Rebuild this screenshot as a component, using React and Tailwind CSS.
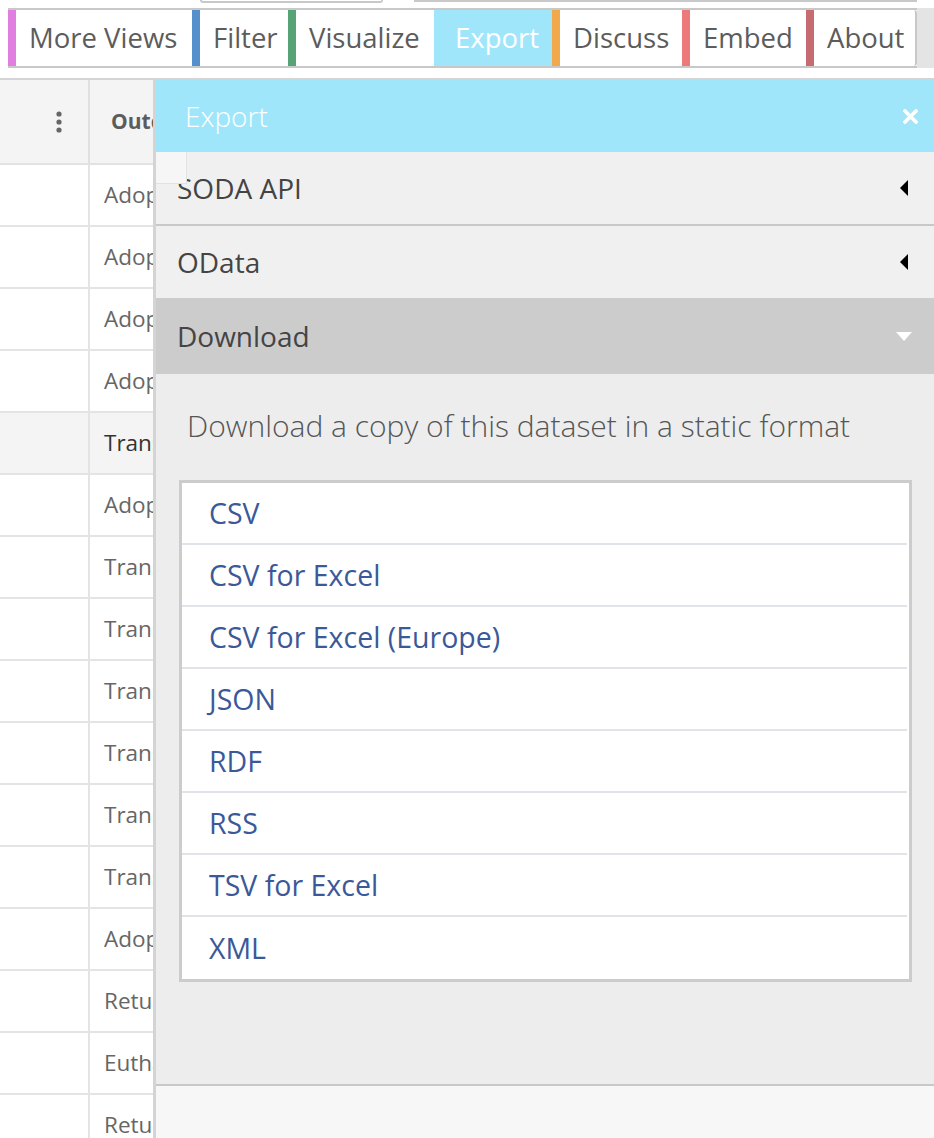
import React from 'react';

const tabs = [
  { label: 'More Views', bar: 'border-l-[#e07fe0]', w: 'w-[184px]' },
  { label: 'Filter', bar: 'border-l-[#5590cc]', w: 'w-[96px]' },
  { label: 'Visualize', bar: 'border-l-[#56a475]', w: 'w-[146px]' },
  { label: 'Export', w: 'w-[118px]', active: true },
  { label: 'Discuss', bar: 'border-l-[#f2a84d]', w: 'w-[130px]' },
  { label: 'Embed', bar: 'border-l-[#ec7a7a]', w: 'w-[124px]' },
  { label: 'About', bar: 'border-l-[#c76b73]', w: 'w-[111px]', last: true },
];

const rows = [
  'Adoption', 'Adoption', 'Adoption', 'Adoption', 'Transfer', 'Adoption', 'Transfer', 'Transfer',
  'Transfer', 'Transfer', 'Transfer', 'Transfer', 'Adoption', 'Return to Owner', 'Euthanasia', 'Return to Owner',
];

const formats = [
  'CSV', 'CSV for Excel', 'CSV for Excel (Europe)', 'JSON', 'RDF', 'RSS', 'TSV for Excel', 'XML',
];

const CaretLeft = () => (
  <svg width="10" height="16" viewBox="0 0 10 16" className="shrink-0">
    <path d="M9 0 L9 16 L1 8 Z" fill="#000" />
  </svg>
);

const CaretDown = () => (
  <svg width="16" height="9" viewBox="0 0 16 9" className="shrink-0">
    <path d="M0 0 L16 0 L8 9 Z" fill="#fff" />
  </svg>
);

const Toolbar = () => (
  <div className="flex h-[60px] shrink-0">
    <div className="w-[8px] bg-white" />
    <div className="flex border-y-2 border-[#c8c8c8] bg-white">
      {tabs.map(t =>
        t.active ? (
          <div
            key={t.label}
            className={`${t.w} shrink-0 flex items-center pl-[21px] text-[27.5px] bg-[#a0e6fa] text-white`}
          >
            {t.label}
          </div>
        ) : (
          <div
            key={t.label}
            className={`${t.w} shrink-0 flex items-center border-l-[8px] ${t.bar} pl-[13px] text-[27.5px] text-[#5c5c5c] ${
              t.last ? 'border-r-2 border-r-[#c8c8c8] rounded-r-[3px]' : ''
            }`}
          >
            {t.label}
          </div>
        )
      )}
    </div>
    <div className="flex-1 bg-[#e4e4e4]" />
  </div>
);

const Table = () => (
  <div className="w-[153px] shrink-0 flex flex-col">
    <div className="flex h-[85px] shrink-0 bg-[#f4f4f4] border-b-2 border-[#e2e2e2]">
      <div className="w-[88px] flex items-center justify-end pr-[26px]">
        <svg width="6" height="22" viewBox="0 0 6 22">
          <circle cx="3" cy="3" r="2.6" fill="#666" />
          <circle cx="3" cy="11" r="2.6" fill="#666" />
          <circle cx="3" cy="19" r="2.6" fill="#666" />
        </svg>
      </div>
      <div className="w-[2px] bg-[#e0e0e0]" />
      <div className="flex-1 overflow-hidden flex items-center pl-[21px] text-[21px] font-bold text-[#5c5c5c] whitespace-nowrap">
        Outcome
      </div>
    </div>
    {rows.map((r, i) => (
      <div
        key={i}
        className={`flex h-[62px] shrink-0 border-b-2 border-[#e4e4e4] ${i === 4 ? 'bg-[#f4f4f4]' : 'bg-white'}`}
      >
        <div className="w-[88px]" />
        <div className="w-[2px] bg-[#e4e4e4]" />
        <div
          className={`flex-1 overflow-hidden flex items-center pl-[14px] text-[22.5px] whitespace-nowrap ${
            i === 4 ? 'text-[#333]' : 'text-[#666]'
          }`}
        >
          {r}
        </div>
      </div>
    ))}
  </div>
);

const Panel = () => (
  <div className="flex-1 flex flex-col border-l-[3px] border-[#d4d4d4] relative">
    <div className="h-[72px] bg-[#a0e6fa] flex items-center justify-between pl-[29px] pr-[16px] shrink-0">
      <span className="text-[28px] font-light text-white">Export</span>
      <svg width="15" height="15" viewBox="0 0 15 15">
        <path d="M2 2 L13 13 M13 2 L2 13" stroke="#fff" strokeWidth="3.6" strokeLinecap="square" />
      </svg>
    </div>
    <div className="absolute left-0 top-[72px] w-[31px] h-[32px] bg-[#f6f6f6] border-r border-b border-[#e2e2e2]" />
    <div className="h-[74px] bg-[#f0f0f0] border-b-2 border-[#c8c8c8] flex items-center justify-between pl-[21px] pr-[25px] shrink-0">
      <span className="text-[28px] text-[#444]">SODA API</span>
      <CaretLeft />
    </div>
    <div className="h-[72px] bg-[#f0f0f0] flex items-center justify-between pl-[21px] pr-[25px] shrink-0">
      <span className="text-[28px] text-[#444]">OData</span>
      <CaretLeft />
    </div>
    <div className="h-[76px] bg-[#cccccc] flex items-center justify-between pl-[21px] pr-[22px] shrink-0">
      <span className="text-[28px] text-[#444]">Download</span>
      <CaretDown />
    </div>
    <div className="h-[712px] bg-[#ededed] border-b-2 border-[#c8c8c8] pl-[23px] pr-[22px] pt-[30px] shrink-0">
      <p className="pl-[8px] text-[30px] font-light text-[#555] leading-[44px] whitespace-nowrap">
        Download a copy of this dataset in a static format
      </p>
      <div className="mt-[32px] bg-white border-[3px] border-[#cccccc]">
        {formats.map((f, i) => (
          <div
            key={f}
            className={`h-[62px] flex items-center pl-[27px] mr-[2px] text-[28.5px] text-[#3b5998] ${
              i < formats.length - 1 ? 'border-b-2 border-[#e0e4e8]' : ''
            }`}
          >
            {f}
          </div>
        ))}
      </div>
    </div>
    <div className="flex-1 bg-[#f7f7f7]" />
  </div>
);

export default function App() {
  return (
    <div
      className="w-[934px] h-[1138px] overflow-hidden bg-white flex flex-col"
      style={{ fontFamily: '"Open Sans", sans-serif' }}
    >
      <div className="h-[8px] flex shrink-0">
        <div className="w-[200px]" />
        <div className="w-[183px] h-[3px] border-b-2 border-x-2 border-[#c8c8c8] rounded-b-[6px]" />
        <div className="w-[31px]" />
        <div className="w-[503px] h-[2px] bg-[#c8c8c8]" />
      </div>
      <Toolbar />
      <div className="h-[10px] shrink-0" />
      <div className="h-[2px] bg-[#d4d4d4] shrink-0" />
      <div className="flex flex-1 min-h-0">
        <Table />
        <Panel />
      </div>
    </div>
  );
}
